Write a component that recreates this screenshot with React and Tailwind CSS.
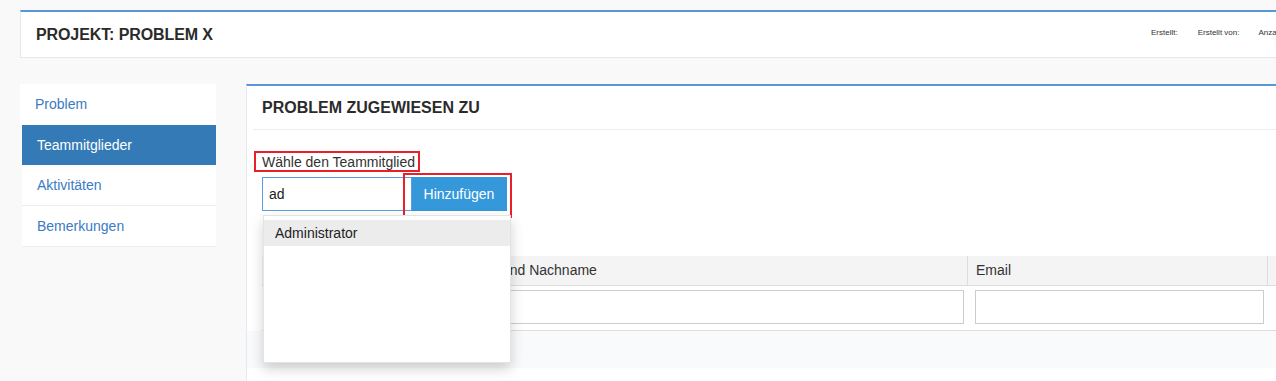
import React from "react";

const navItems = [
  { label: "Teammitglieder", active: true },
  { label: "Aktivitäten" },
  { label: "Bemerkungen" },
];

function Header() {
  return (
    <div className="flex items-center h-[48px] w-[1330px] bg-white border-t-2 border-t-[#5b95d9] border-l border-b border-[#e3e8ee] pl-[15px]">
      <h1 className="text-[16px] font-bold text-[#2b2b2b] tracking-[-0.1px]">PROJEKT: PROBLEM X</h1>
      <div className="ml-auto w-[199px] flex items-center text-[8px] text-[#333] -mt-[3px]">
        <span>Erstellt:</span>
        <span className="ml-[20px]">Erstellt von:</span>
        <span className="ml-[19px] whitespace-nowrap">Anzahl Mitglieder:</span>
      </div>
    </div>
  );
}

function Sidebar() {
  return (
    <div className="w-[196px] shrink-0 flex flex-col text-[14px]">
      <a className="h-[41px] flex items-center pl-[15px] bg-white text-[#3a7bc4]">Problem</a>
      {navItems.map((item) =>
        item.active ? (
          <a key={item.label} className="ml-[2px] h-[40px] flex items-center pl-[15px] bg-[#337ab7] text-white">
            {item.label}
          </a>
        ) : (
          <a key={item.label} className="ml-[2px] h-[41px] flex items-center pl-[15px] bg-white text-[#3a7bc4] border-b border-[#eceef0]">
            {item.label}
          </a>
        )
      )}
    </div>
  );
}

function MemberForm() {
  return (
    <div className="pl-[15px] pt-[22px]">
      <div className="relative w-fit text-[14px] text-[#333] leading-[20px]">
        Wähle den Teammitglied
        <span className="absolute left-[-8px] top-[-1px] w-[166px] h-[21px] border-2 border-[#e8202a]"></span>
      </div>
      <div className="relative flex mt-[5px]">
        <div className="relative">
          <input
            readOnly
            value="ad"
            className="block w-[150px] h-[34px] border border-[#5a9ee0] pl-[6px] text-[14px] text-[#222] outline-none bg-white"
          />
          <div className="absolute left-[1px] top-[38px] w-[248px] h-[148px] bg-white border border-[#e4e4e4] shadow-[0_6px_12px_rgba(0,0,0,0.18)] pt-[4px] z-20">
            <div className="h-[26px] flex items-center pl-[11px] bg-[#ececec] text-[14px] text-[#222]">Administrator</div>
          </div>
        </div>
        <button className="ml-[-1px] w-[96px] h-[34px] bg-[#3498db] text-white text-[14px]">Hinzufügen</button>
        <span className="absolute left-[141px] top-[-4px] w-[109px] h-[45px] border-2 border-[#e8202a] z-10"></span>
      </div>
    </div>
  );
}

function MembersTable() {
  return (
    <div className="mt-[45px] ml-[15px] text-[14px] text-[#333]">
      <div className="flex h-[30px] bg-[#f4f4f4] border-b border-[#dddddd]">
        <div className="w-[172px] flex items-center pl-2"></div>
        <div className="w-[533px] flex items-center pl-2">Vorname und Nachname</div>
        <div className="w-[300px] flex items-center pl-2 border-l border-[#dddddd]">Email</div>
        <div className="w-[40px] border-l border-[#dddddd]"></div>
      </div>
      <div className="flex h-[45px] border-b border-[#dddddd] pt-[4px]">
        <div className="w-[172px]"></div>
        <div className="w-[533px] pl-2 pr-[3px]">
          <div className="h-[34px] border border-[#cccccc] bg-white"></div>
        </div>
        <div className="w-[300px] pl-2 pr-[3px]">
          <div className="h-[34px] border border-[#cccccc] bg-white"></div>
        </div>
      </div>
    </div>
  );
}

export default function App() {
  return (
    <div className="w-[1276px] h-[381px] overflow-hidden bg-[#f9f9fa] font-['Liberation_Sans',Arial,sans-serif]">
      <div className="pl-[20px] pt-[10px]">
        <Header />
        <div className="flex mt-[26px]">
          <Sidebar />
          <div className="ml-[30px] w-[1100px] shrink-0 bg-white border-t-2 border-t-[#5b95d9] border-l border-[#e6eaf0] h-[320px]">
            <div className="ml-[6px] h-[44px] flex items-center pl-[9px] border-b border-[#eceef2]">
              <h2 className="text-[16px] font-bold text-[#2b2b2b]">PROBLEM ZUGEWIESEN ZU</h2>
            </div>
            <MemberForm />
            <MembersTable />
            <div className="h-[37px] bg-[#f9fafc]"></div>
          </div>
        </div>
      </div>
    </div>
  );
}
